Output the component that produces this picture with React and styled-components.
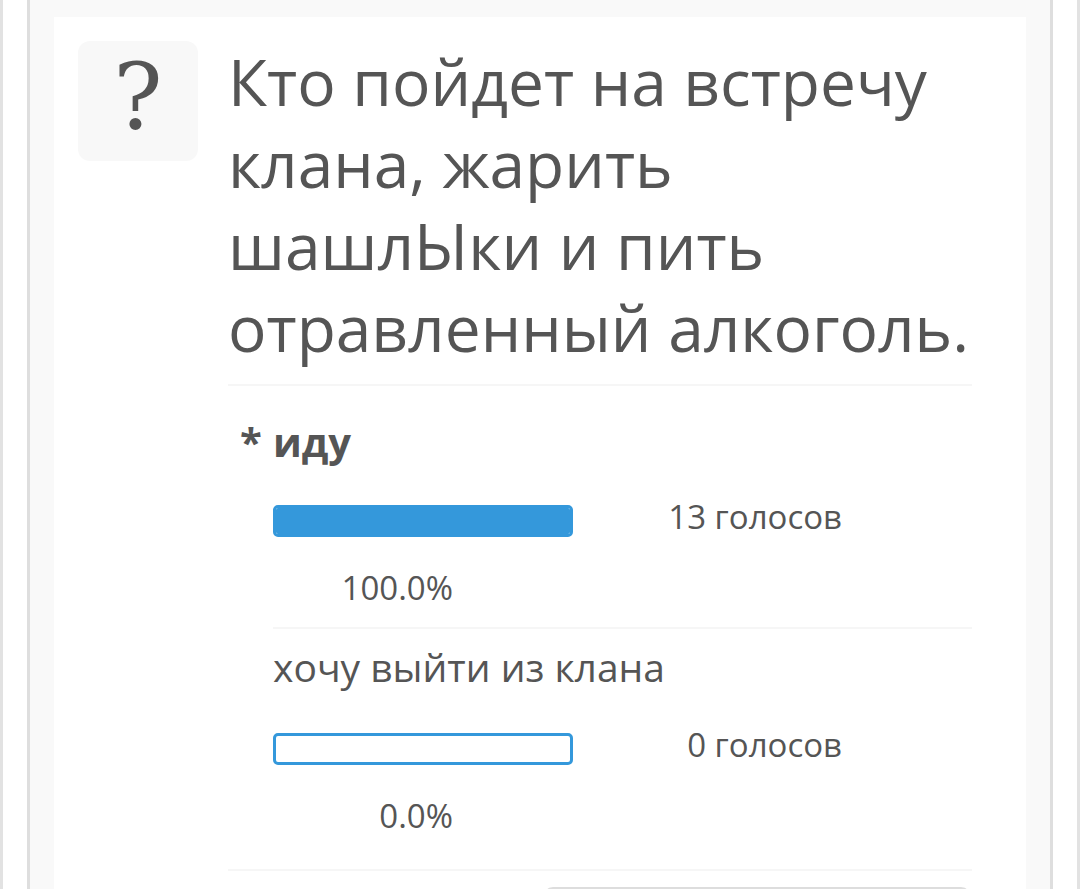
import React from "react";
import styled, { createGlobalStyle } from "styled-components";

const Global = createGlobalStyle`
  html, body { margin: 0; padding: 0; background: #fff; }
  body { font-family: "Open Sans", "Noto Sans", sans-serif; color: #555; }
  * { box-sizing: border-box; }
`;

const Outer = styled.div`
  min-height: 100vh;
  border-left: 3px solid #e2e2e2;
  border-right: 3px solid #e2e2e2;
  padding: 0 24px;
  background: #fff;
  display: flex;
`;

const Panel = styled.div`
  flex: 1;
  min-height: 100vh;
  border-left: 3px solid #dedede;
  border-right: 3px solid #dedede;
  background: #f9f9f9;
  padding: 17px 24px 0;
`;

const Card = styled.div`
  background: #fff;
  padding: 24px 54px 40px 24px;
  min-height: 1000px;
`;

const Header = styled.div`
  display: flex;
  gap: 30px;
  align-items: flex-start;
`;

const QIcon = styled.div`
  flex: 0 0 120px;
  height: 120px;
  border-radius: 12px;
  background: #f8f8f8;
  display: flex;
  align-items: center;
  justify-content: center;
  font-family: "DejaVu Serif", "Liberation Serif", serif;
  font-size: 92px;
  line-height: 1;
  color: #555;
  padding-bottom: 6px;
`;

const Body = styled.div`
  flex: 1;
  min-width: 0;
`;

const Title = styled.h1`
  margin: 0;
  font-weight: 400;
  font-size: 64px;
  line-height: 82px;
  color: #555;
  padding-bottom: 15px;
  border-bottom: 2px solid #f6f6f6;
`;

const Results = styled.div`
  padding-bottom: 14px;
  border-bottom: 2px solid #f6f6f6;
`;

const Option = styled.div`
  margin-left: 45px;
  padding-bottom: 19px;
  border-bottom: ${(p) => (p.$last ? "none" : "2px solid #f6f6f6")};
`;

const Label = styled.div`
  font-size: ${(p) => (p.$voted ? "40px" : "39px")};
  font-weight: ${(p) => (p.$voted ? 700 : 400)};
  line-height: 52px;
  padding-top: ${(p) => (p.$voted ? "30px" : "12px")};
  margin-bottom: ${(p) => (p.$voted ? "37px" : "40px")};
  color: #555;
`;

const Marker = styled.span`
  display: inline-block;
  width: 33px;
  margin-left: -33px;
`;

const BarRow = styled.div`
  display: grid;
  grid-template-columns: 300px 269px;
  align-items: start;
`;

const Bar = styled.div`
  height: 32px;
  border: 3px solid #3498db;
  border-radius: 5px;
  background: #fff;
  overflow: hidden;
`;

const Fill = styled.div`
  height: 100%;
  background: #3498db;
`;

const Votes = styled.div`
  font-size: 33px;
  line-height: 40px;
  text-align: right;
  margin-top: -8px;
  color: #555;
`;

const Percent = styled.div`
  width: 180px;
  margin-top: 31px;
  font-size: 33px;
  line-height: 40px;
  text-align: right;
  color: #555;
`;

const Actions = styled.div`
  display: flex;
  justify-content: flex-end;
  margin-top: 16px;
`;

const Button = styled.button`
  width: 428px;
  height: 64px;
  margin-right: 1px;
  border: 2px solid #dddddd;
  border-radius: 10px;
  background: #fafafa;
  font-family: "Open Sans", sans-serif;
  font-size: 34px;
  color: #555;
`;

const options = [
  { text: "иду", votes: "13 голосов", pct: 100, voted: true },
  { text: "хочу выйти из клана", votes: "0 голосов", pct: 0, voted: false },
];

export default function App() {
  return (
    <>
      <Global />
      <Outer>
        <Panel>
          <Card>
            <Header>
              <QIcon>?</QIcon>
              <Body>
                <Title>Кто пойдет на встречу клана, жарить шашлЫки и пить отравленный алкоголь.</Title>
                <Results>
                  {options.map((o, i) => (
                    <Option key={i} $last={i === options.length - 1}>
                      <Label $voted={o.voted}>
                        {o.voted && <Marker>*</Marker>}
                        {o.text}
                      </Label>
                      <BarRow>
                        <Bar>
                          <Fill style={{ width: `${o.pct}%` }} />
                        </Bar>
                        <Votes>{o.votes}</Votes>
                      </BarRow>
                      <Percent>{o.pct.toFixed(1)}%</Percent>
                    </Option>
                  ))}
                </Results>
                <Actions>
                  <Button aria-label="vote" />
                </Actions>
              </Body>
            </Header>
          </Card>
        </Panel>
      </Outer>
    </>
  );
}
